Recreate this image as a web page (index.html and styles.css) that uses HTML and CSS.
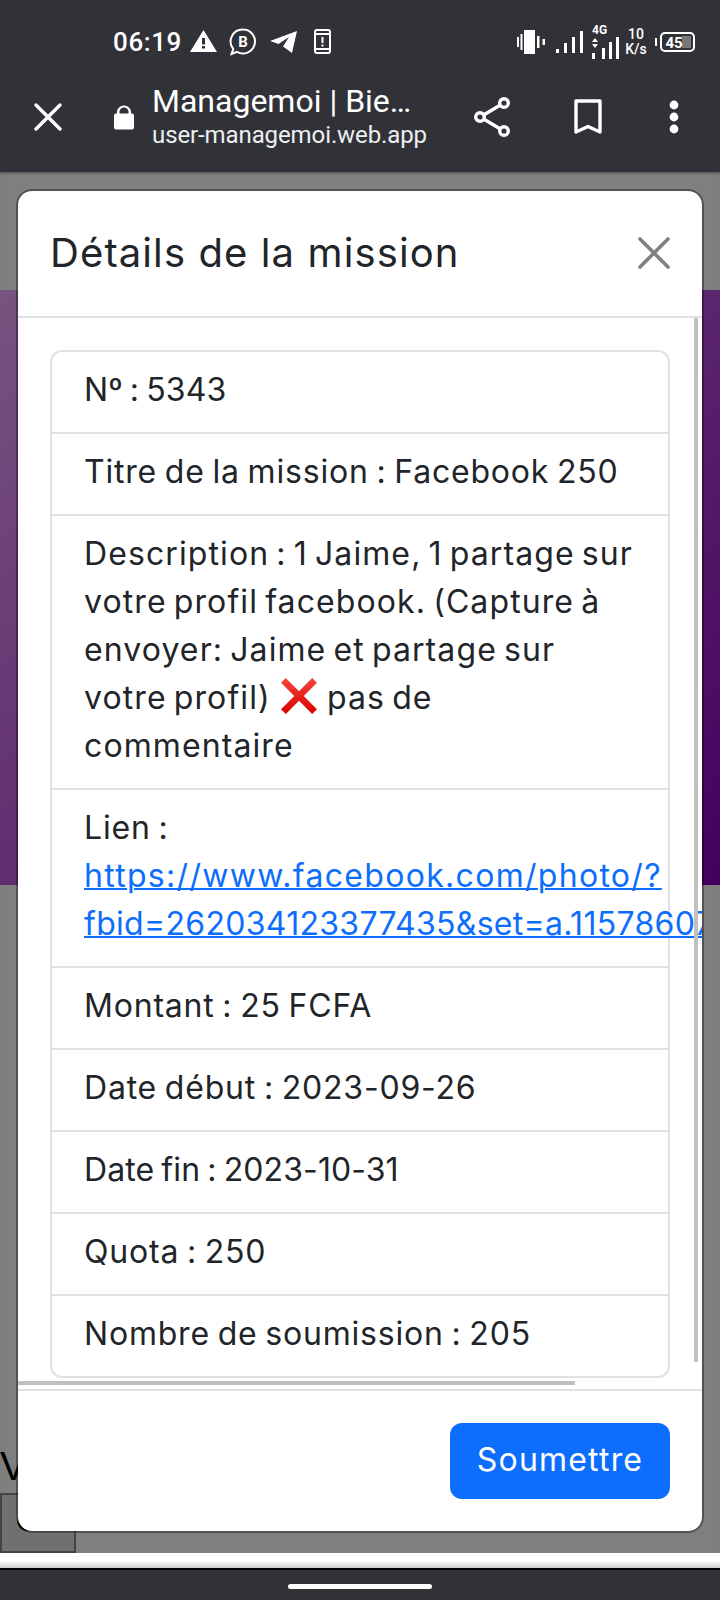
FILE: index.html
```html
<!DOCTYPE html>
<html lang="fr">
<head>
<meta charset="utf-8">
<title>Managemoi</title>
<link rel="stylesheet" href="styles.css">
</head>
<body>
<div class="screen">
  <header class="chrome">
    <div class="status">
      <div class="status-left">
        <span class="time">06:19</span>
        <svg class="ic-warn" viewBox="0 0 27 22"><path fill="#fff" fill-rule="evenodd" d="M13.500 0 27 22H0ZM12 8v6.500h3V8ZM12 16v2.500h3V16Z"/></svg>
        <svg class="ic-biz" viewBox="0 0 28 28"><path fill="none" stroke="#fff" stroke-width="2" d="M14 1.500a12 12 0 1 1-6 22.400L2.500 26l1.800-5A12 12 0 0 1 14 1.500Z"/><text x="14" y="19" class="biz-b">B</text></svg>
        <svg class="ic-tg" viewBox="0 0 27 22"><path fill="#fff" d="M27 0 22 22 13 15.500 19 6 8.500 13 0 10Z"/></svg>
        <svg class="ic-phone" viewBox="0 0 17 25"><rect x="1" y="1" width="15" height="23" rx="2" fill="none" stroke="#fff" stroke-width="2"/><path stroke="#fff" stroke-width="2" d="M1 5h15M1 20h15M8.500 8v6M8.500 15.500v2"/></svg>
      </div>
      <div class="status-right">
        <svg class="ic-vib" viewBox="0 0 28 24"><path fill="#fff" d="M7 0h11v24H7ZM0 7h2v10H0ZM3.500 4h2v16h-2ZM20 6h2.500v12H20ZM25.500 9H28v6h-2.500Z"/></svg>
        <svg class="ic-sig1" viewBox="0 0 28 24"><path fill="#fff" d="M0 19h3v4H0ZM8 13h3v10H8ZM16 7h3v16h-3ZM24 1h3v22h-3Z"/></svg>
        <div class="net">
          <span class="net-4g">4G</span>
          <svg class="ic-sig2" viewBox="0 0 30 22"><path fill="#fff" d="M3 5l3-4 3 4ZM3 7h6l-3 4ZM3 16h3v6H3ZM13 11h3v11h-3ZM20 5h3v17h-3ZM27 0h3v22h-3Z"/></svg>
        </div>
        <div class="speed"><span>10</span><span>K/s</span></div>
        <svg class="ic-batt" viewBox="0 0 40 20"><rect x="0" y="6" width="2" height="8" fill="#fff"/><rect x="6" y="1" width="33" height="18" rx="4" fill="none" stroke="#fff" stroke-width="2"/><rect x="27" y="4" width="9" height="12" fill="#777"/><text x="19" y="15.500" class="batt-n">45</text></svg>
      </div>
    </div>
    <div class="toolbar">
      <svg class="ic-close" viewBox="0 0 28 28"><path stroke="#fff" stroke-width="3.400" stroke-linecap="round" d="M2 2l24 24M26 2 2 26"/></svg>
      <svg class="ic-lock" viewBox="0 0 20 24"><path fill="#fff" d="M3 8V6.500a7 6.500 0 0 1 14 0V8h1a2 2 0 0 1 2 2v12a2 2 0 0 1-2 2H2a2 2 0 0 1-2-2V10a2 2 0 0 1 2-2ZM5.500 8h9V6.500a4.500 4.500 0 0 0-9 0Z"/></svg>
      <div class="site">
        <div class="site-title">Managemoi | Bie…</div>
        <div class="site-url">user-managemoi.web.app</div>
      </div>
      <svg class="ic-share" viewBox="0 0 36 40"><g fill="none" stroke="#fff" stroke-width="3.400"><circle cx="30" cy="6" r="4.300"/><circle cx="6" cy="20" r="4.300"/><circle cx="30" cy="34" r="4.300"/><path d="M10 17.700 26 8.300M10 22.300 26 31.700"/></g></svg>
      <svg class="ic-mark" viewBox="0 0 28 36"><path fill="none" stroke="#fff" stroke-width="3.400" stroke-linejoin="round" d="M2 2h24v31l-12-5.500L2 33Z"/></svg>
      <svg class="ic-more" viewBox="0 0 10 34"><circle cx="5" cy="5" r="4.400" fill="#fff"/><circle cx="5" cy="17" r="4.400" fill="#fff"/><circle cx="5" cy="29" r="4.400" fill="#fff"/></svg>
    </div>
  </header>

  <main class="page">
    <div class="band"></div>
    <div class="page-rest">
      <p class="page-text">V</p>
      <div class="page-btn">OK</div>
    </div>
    <div class="backdrop"></div>
    <section class="modal">
      <div class="modal-head">
        <h1 class="modal-title">Détails de la mission</h1>
        <svg class="modal-x" viewBox="0 0 32 32"><path stroke="#808080" stroke-width="3.600" stroke-linecap="round" d="M2 2l28 28M30 2 2 30"/></svg>
      </div>
      <div class="modal-body">
        <ul class="list">
          <li class="row row-tight">Nº : 5343</li>
          <li class="row">Titre de la mission : Facebook 250</li>
          <li class="row row-loose">Description : 1 Jaime, 1 partage sur<br>votre profil facebook. (Capture à<br>envoyer: Jaime et partage sur<br>votre profil) <svg class="emoji" viewBox="0 0 36 36"><defs><linearGradient id="xred" x1="0" y1="0" x2="0" y2="1"><stop offset="0" stop-color="#f6463c"/><stop offset="1" stop-color="#d80000"/></linearGradient></defs><path fill="url(#xred)" d="M1 5.500 5.500 1 18 13.500 30.500 1 35 5.500 22.500 18 35 30.500 30.500 35 18 22.500 5.500 35 1 30.500 13.500 18Z"/></svg> pas de<br>commentaire</li>
          <li class="row">Lien :<br><a class="link" href="#"><span class="link-first">https://www.facebook.com/photo/?</span><br><span class="link-second">fbid=262034123377435&amp;set=a.115786072</span></a></li>
          <li class="row">Montant : 25 FCFA</li>
          <li class="row">Date début : 2023-09-26</li>
          <li class="row row-tight">Date fin : 2023-10-31</li>
          <li class="row">Quota : 250</li>
          <li class="row">Nombre de soumission : 205</li>
        </ul>
        <div class="scroll-v"></div>
        <div class="scroll-h"></div>
      </div>
      <div class="modal-foot">
        <button class="submit" type="button">Soumettre</button>
      </div>
    </section>
  </main>

  <div class="page-end"></div>
  <footer class="nav"><span class="pill"></span></footer>
</div>
</body>
</html>
```
FILE: styles.css
```css
* { box-sizing: border-box; }
html, body { margin: 0; padding: 0; }
body { width: 720px; height: 1600px; overflow: hidden; background: #fff; font-family: Inter, "Liberation Sans", sans-serif; }
.screen { display: flex; flex-direction: column; height: 1600px; }

.chrome { height: 172px; background: #313237; color: #fff; font-family: Roboto, sans-serif; flex: none; display: flex; flex-direction: column; }
.status { height: 64px; padding: 19px 25px 0 113px; display: flex; justify-content: space-between; align-items: center; }
.status-left, .status-right { display: flex; align-items: center; }
.time { font-size: 26px; font-weight: 500; line-height: 26px; width: 70px; letter-spacing: .6px; white-space: nowrap; }
.ic-warn { width: 27px; height: 22px; margin: -2px 0 0 7px; }
.ic-biz { width: 28px; height: 28px; margin-left: 12px; }
.biz-b { font: 700 15px Roboto, sans-serif; fill: #fff; text-anchor: middle; }
.ic-tg { width: 27px; height: 22px; margin-left: 13px; }
.ic-phone { width: 17px; height: 25px; margin-left: 17px; }
.ic-vib { width: 28px; height: 24px; }
.ic-sig1 { width: 28px; height: 24px; margin-left: 11px; }
.net { width: 30px; margin-left: 5px; height: 34px; position: relative; }
.net-4g { position: absolute; left: 3px; top: -1px; font-size: 12px; font-weight: 700; line-height: 13px; }
.ic-sig2 { position: absolute; left: 0; bottom: 0; width: 30px; height: 22px; }
.speed { width: 24px; margin-left: 5px; display: flex; flex-direction: column; align-items: center; font-size: 14px; font-weight: 500; line-height: 15px; }
.ic-batt { width: 40px; height: 20px; margin-left: 7px; }
.batt-n { font: 700 15px Roboto, sans-serif; fill: #fff; text-anchor: middle; }

.toolbar { flex: 1; display: flex; align-items: center; padding: 0 0 3px 33px; }
.ic-close { width: 30px; height: 28px; flex: none; }
.ic-lock { width: 20px; height: 25px; flex: none; margin: 2px 0 0 51px; }
.site { width: 290px; margin-left: 18px; flex: none; }
.site-title { font-size: 32px; line-height: 38px; white-space: nowrap; }
.site-url { font-size: 24px; line-height: 31px; letter-spacing: -.1px; color: #eceff1; white-space: nowrap; }
.ic-share { width: 36px; height: 40px; flex: none; margin-left: 32px; }
.ic-mark { width: 28px; height: 36px; flex: none; margin-left: 64px; }
.ic-more { width: 10px; height: 34px; flex: none; margin-left: 67px; }

.page { flex: none; height: 1381px; position: relative; background: #fff; overflow: hidden; }
.band { margin-top: 118px; height: 595px; background: linear-gradient(135deg, #f0a8ff, #8800be); }
.page-rest { position: relative; }
.page-text { margin: 0; position: absolute; left: 0; top: 559px; font: 40px "Liberation Sans", sans-serif; color: #000; }
.page-btn { position: absolute; left: 0; top: 608px; width: 76px; height: 60px; background: #e0e0e0; border: 2px solid #888; font: 30px/52px "Liberation Sans", sans-serif; text-align: center; color: #000; }
.backdrop { position: absolute; inset: 0; background: rgba(0, 0, 0, .5); box-shadow: inset 0 3px 3px -2px rgba(0,0,0,.4); }

.modal { position: absolute; left: 16px; top: 17px; width: 688px; height: 1344px; background: #fff; border: 2px solid rgba(0, 0, 0, .35); background-clip: padding-box; border-radius: 16px; display: flex; flex-direction: column; overflow: hidden; color: #212529; }
.modal-head { height: 127px; flex: none; padding: 0 32px 2px; display: flex; align-items: center; justify-content: space-between; border-bottom: 2px solid #dee2e6; }
.modal-title { margin: 0; font-size: 40px; line-height: 60px; font-weight: 400; letter-spacing: 1.1px; }
.modal-x { width: 32px; height: 32px; flex: none; }
.modal-body { flex: 1; min-height: 0; padding: 32px; overflow: hidden; position: relative; }
.list { margin: 0; padding: 0; list-style: none; border: 2px solid #dee2e6; border-radius: 12px; }
.row { padding: 14px 32px 18px; font-size: 32px; line-height: 48px; letter-spacing: .8px; word-spacing: -2px; white-space: nowrap; border-top: 2px solid #dee2e6; }
.row:first-child { border-top: 0; }
.row-tight { letter-spacing: .1px; }
.row-loose { letter-spacing: 1.1px; word-spacing: -3px; }
.emoji { width: 38px; height: 38px; vertical-align: -6px; margin: 0 2px; }
.link { color: #0d6efd; text-decoration: underline; text-decoration-thickness: 2px; }
.link-first { letter-spacing: 1.3px; }
.link-second { letter-spacing: .3px; }
.scroll-v { position: absolute; left: 676px; top: 0; width: 4px; height: 1044px; background: #c0c0c0; }
.scroll-h { position: absolute; left: 0; top: 1063px; width: 557px; height: 4px; background: #c0c0c0; }
.modal-foot { flex: none; height: 142px; padding: 32px; border-top: 2px solid #dee2e6; display: flex; justify-content: flex-end; }
.submit { width: 220px; height: 76px; padding: 0 0 3px; border: 0; border-radius: 12px; background: #0d6efd; color: #fff; font: 400 32px Inter, sans-serif; letter-spacing: 1.2px; }

.page-end { flex: none; height: 15px; background: linear-gradient(#fff 50%, #ccc); }
.nav { flex: 1; background: #313237; border-top: 2px solid #000; display: flex; justify-content: center; align-items: center; padding-top: 2px; }
.pill { width: 144px; height: 5px; border-radius: 3px; background: #fff; }
```
